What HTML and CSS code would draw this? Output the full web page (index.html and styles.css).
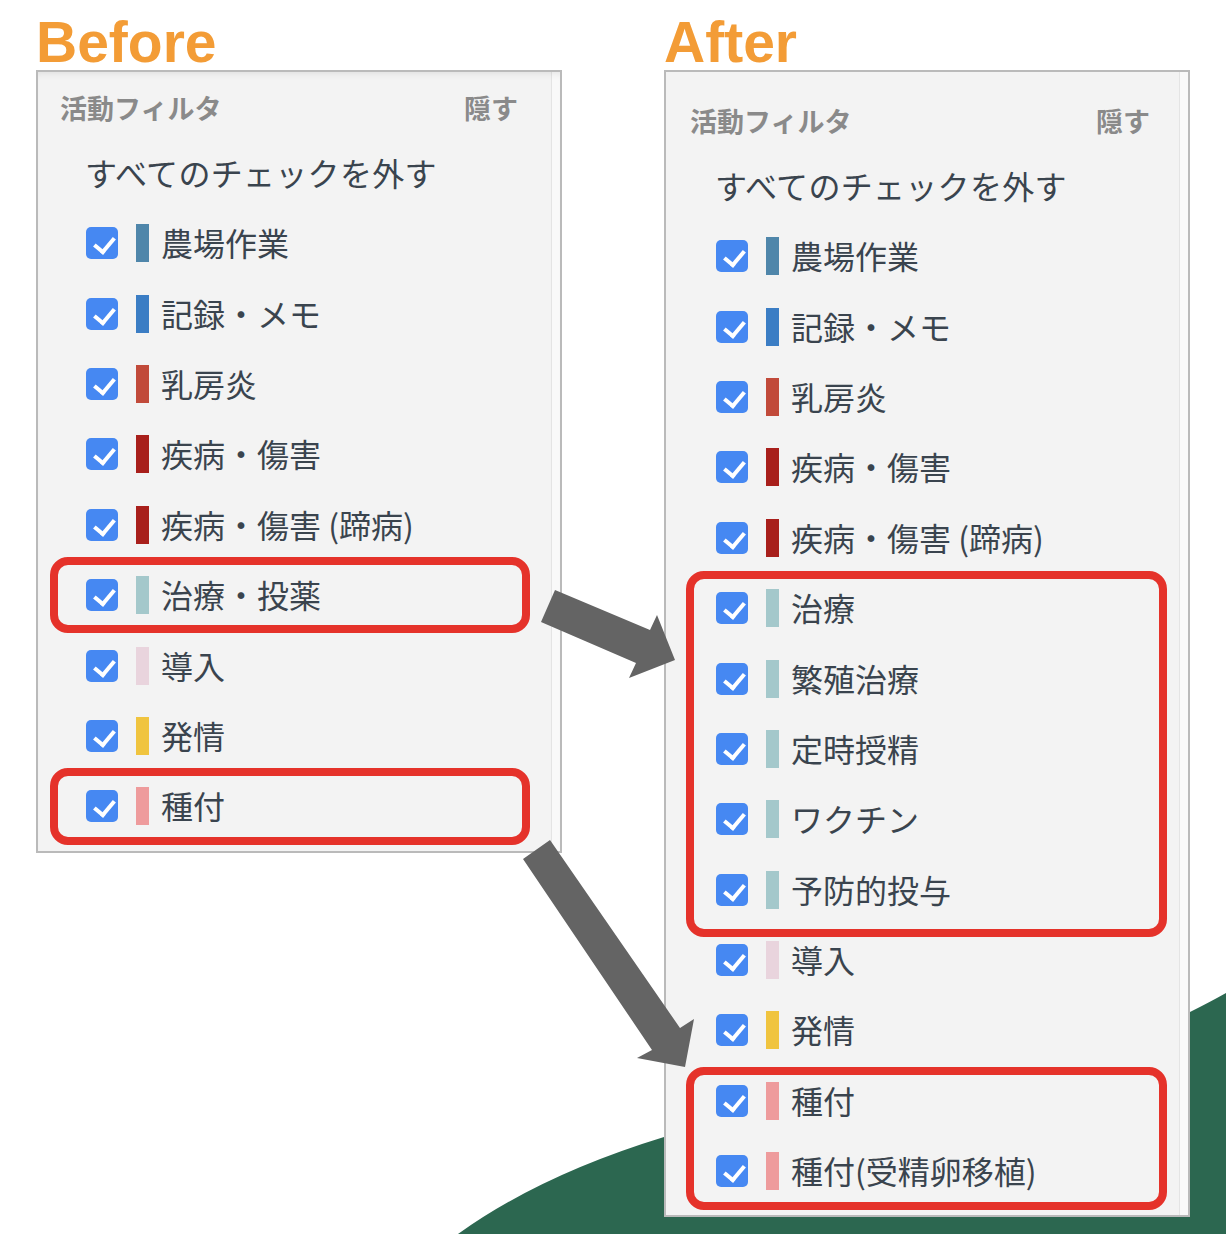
FILE: index.html
```html
<!DOCTYPE html>
<html lang="ja">
<head>
  <meta charset="UTF-8" />
  <meta name="viewport" content="width=device-width, initial-scale=1.0"/>
  <title>活動フィルタ Before / After</title>
  <link rel="stylesheet" href="styles.css">
</head>
<body>
  <!-- green corner shape behind the panels -->
  <svg class="backdrop" viewBox="0 0 1226 1234" aria-hidden="true">
    <path d="M458 1234 Q540 1175 664 1137 L1190 1012 Q1210 1002 1226 993 L1226 1234 Z" />
  </svg>

  <main class="compare">
    <!-- Before -->
    <section class="col col-before">
      <h1 class="title">Before</h1>
      <div class="panel panel-before">
        <div class="panel-head">
          <span>活動フィルタ</span>
          <span>隠す</span>
        </div>
        <div class="clear-all">すべてのチェックを外す</div>
        <ul class="filters">
          <li class="filter"><span class="check"></span><span class="swatch c-farm"></span><span class="name">農場作業</span></li>
          <li class="filter"><span class="check"></span><span class="swatch c-memo"></span><span class="name">記録・メモ</span></li>
          <li class="filter"><span class="check"></span><span class="swatch c-mastitis"></span><span class="name">乳房炎</span></li>
          <li class="filter"><span class="check"></span><span class="swatch c-disease"></span><span class="name">疾病・傷害</span></li>
          <li class="filter"><span class="check"></span><span class="swatch c-disease"></span><span class="name">疾病・傷害 (蹄病)</span></li>
          <li class="mark mark-b1">
            <div class="filter"><span class="check"></span><span class="swatch c-treat"></span><span class="name">治療・投薬</span></div>
          </li>
          <li class="filter"><span class="check"></span><span class="swatch c-intro"></span><span class="name">導入</span></li>
          <li class="filter"><span class="check"></span><span class="swatch c-heat"></span><span class="name">発情</span></li>
          <li class="mark mark-b2">
            <div class="filter"><span class="check"></span><span class="swatch c-breed"></span><span class="name">種付</span></div>
          </li>
        </ul>
      </div>
    </section>

    <!-- After -->
    <section class="col col-after">
      <h1 class="title">After</h1>
      <div class="panel panel-after">
        <div class="panel-head">
          <span>活動フィルタ</span>
          <span>隠す</span>
        </div>
        <div class="clear-all">すべてのチェックを外す</div>
        <ul class="filters">
          <li class="filter"><span class="check"></span><span class="swatch c-farm"></span><span class="name">農場作業</span></li>
          <li class="filter"><span class="check"></span><span class="swatch c-memo"></span><span class="name">記録・メモ</span></li>
          <li class="filter"><span class="check"></span><span class="swatch c-mastitis"></span><span class="name">乳房炎</span></li>
          <li class="filter"><span class="check"></span><span class="swatch c-disease"></span><span class="name">疾病・傷害</span></li>
          <li class="filter"><span class="check"></span><span class="swatch c-disease"></span><span class="name">疾病・傷害 (蹄病)</span></li>
          <li class="mark mark-a1">
            <div class="filter"><span class="check"></span><span class="swatch c-treat"></span><span class="name">治療</span></div>
            <div class="filter"><span class="check"></span><span class="swatch c-treat"></span><span class="name">繁殖治療</span></div>
            <div class="filter"><span class="check"></span><span class="swatch c-treat"></span><span class="name">定時授精</span></div>
            <div class="filter"><span class="check"></span><span class="swatch c-treat"></span><span class="name">ワクチン</span></div>
            <div class="filter"><span class="check"></span><span class="swatch c-treat"></span><span class="name">予防的投与</span></div>
          </li>
          <li class="filter"><span class="check"></span><span class="swatch c-intro"></span><span class="name">導入</span></li>
          <li class="filter"><span class="check"></span><span class="swatch c-heat"></span><span class="name">発情</span></li>
          <li class="mark mark-a2">
            <div class="filter"><span class="check"></span><span class="swatch c-breed"></span><span class="name">種付</span></div>
            <div class="filter"><span class="check"></span><span class="swatch c-breed"></span><span class="name">種付(受精卵移植)</span></div>
          </li>
        </ul>
      </div>
    </section>
  </main>

  <!-- arrows from the old items to the new ones -->
  <svg class="arrows" viewBox="0 0 1226 1234" aria-hidden="true">
    <polygon points="555,590 650,630 657,615 675,660 629,678 636,663 541,622" />
    <polygon points="550,840 680,1028 694,1019 685,1067 637,1058 652,1050 523,859" />
  </svg>
</body>
</html>
```

FILE: styles.css
```css
:root {
  --orange: #f39c36;
  --panel-bg: #f3f3f3;
  --panel-border: #bababa;
  --text: #3a444e;
  --muted: #8a8a8a;
  --check: #4688f2;
  --ring: #e5322a;
  --arrow: #646464;
  --green: #2c6750;
}

* {
  box-sizing: border-box;
}

body {
  margin: 0;
  width: 1226px;
  height: 1234px;
  overflow: hidden;
  position: relative;
  background: #fff;
  font-family: "Noto Sans CJK JP", "Noto Sans", sans-serif;
  color: var(--text);
}

.backdrop,
.arrows {
  position: absolute;
  top: 0;
  left: 0;
  width: 1226px;
  height: 1234px;
  pointer-events: none;
}

.backdrop {
  z-index: 0;
}

.backdrop path {
  fill: var(--green);
}

.arrows {
  z-index: 2;
}

.arrows polygon {
  fill: var(--arrow);
}

.compare {
  position: relative;
  z-index: 1;
  display: flex;
  align-items: flex-start;
  gap: 102px;
  padding-left: 36px;
}

.col {
  width: 526px;
}

.title {
  margin: 0;
  padding-top: 15px;
  font-family: "Liberation Sans", Arial, sans-serif;
  font-size: 57px;
  line-height: 55px;
  font-weight: 700;
  color: var(--orange);
}

/* filter panel */
.panel {
  border: 2px solid var(--panel-border);
  background:
    linear-gradient(to left, #f9f9f9 0 8px, #e4e4e4 8px 9px, transparent 9px),
    var(--panel-bg);
}

.panel-before {
  padding: 16px 42px 9px 22px;
  box-shadow: inset 0 7px 7px -5px rgba(0, 0, 0, 0.08);
}

.panel-after {
  padding: 29px 38px 9px 24px;
}

.panel-head {
  display: flex;
  justify-content: space-between;
  font-size: 27px;
  line-height: 40px;
  font-weight: 700;
  color: var(--muted);
}

.clear-all {
  margin: 24px 0 0 25px;
  font-size: 32px;
  line-height: 40px;
  letter-spacing: 0.3px;
}

.filters {
  list-style: none;
  margin: 16px 0 0;
  padding: 0;
}

.filter {
  display: flex;
  align-items: center;
  height: 70.4px;
  padding-left: 26px;
}

.check {
  position: relative;
  flex: none;
  width: 32px;
  height: 32px;
  border-radius: 5px;
  background: var(--check);
}

.check::after {
  content: '';
  position: absolute;
  left: 12px;
  top: 6px;
  width: 9px;
  height: 16px;
  border: solid #fff;
  border-width: 0 4px 4px 0;
  transform: rotate(40deg);
}

.swatch {
  flex: none;
  width: 13px;
  height: 38px;
  margin-left: 18px;
}

.name {
  margin-left: 12px;
  font-size: 32px;
  line-height: 40px;
  margin-top: -2px;
  white-space: nowrap;
}

.c-farm { background: #4f86aa; }
.c-memo { background: #3b7dc4; }
.c-mastitis { background: #c14a3a; }
.c-disease { background: #a81f1b; }
.c-treat { background: #a4c8cb; }
.c-intro { background: #e9d4dd; }
.c-heat { background: #f0c43f; }
.c-breed { background: #ee9b9c; }

/* red rings around the changed rows */
.mark {
  position: relative;
}

.mark::after {
  content: '';
  position: absolute;
  border: 8px solid var(--ring);
  border-radius: 18px;
}

.mark-b1::after { top: -3px; bottom: -3px; left: -10px; right: -12px; }
.mark-b2::after { top: -3px; bottom: -3px; left: -10px; right: -12px; }
.mark-a1::after { top: -2px; bottom: -12px; left: -4px; right: -17px; }
.mark-a2::after { top: 1px; bottom: -4px; left: -4px; right: -17px; }
```
